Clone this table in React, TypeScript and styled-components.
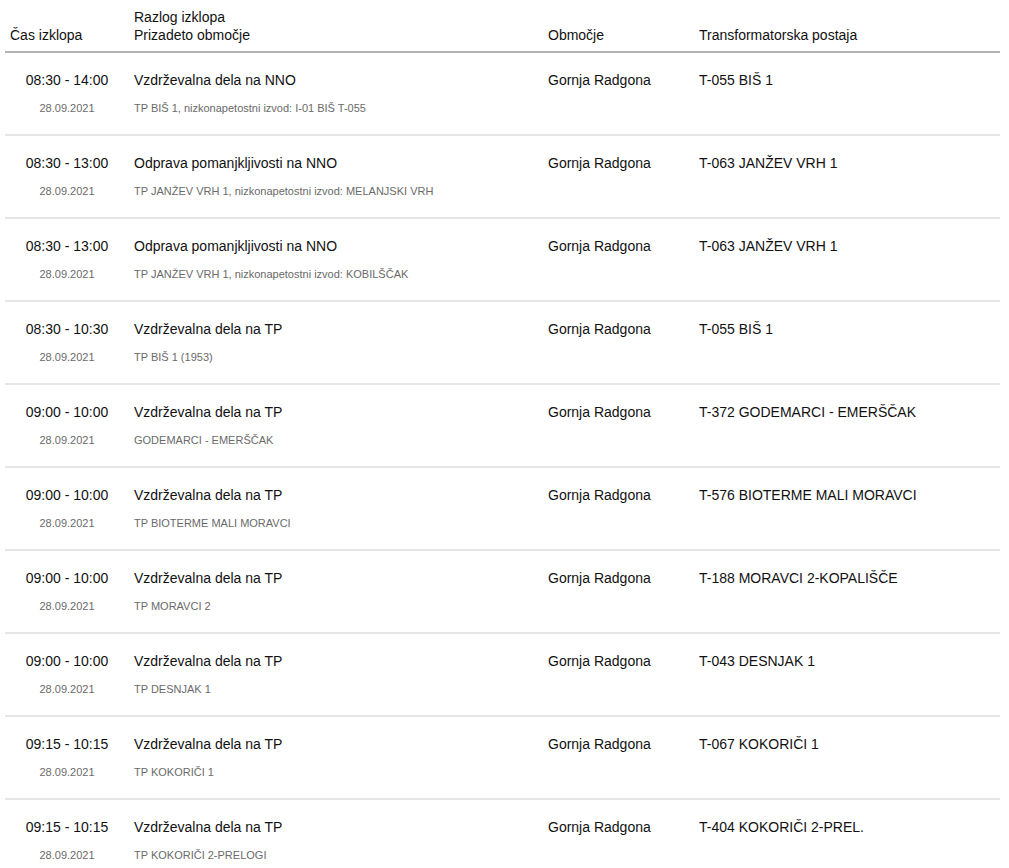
import React from "react";
import styled, { createGlobalStyle } from "styled-components";

const Global = createGlobalStyle`
  html, body { margin: 0; padding: 0; background: #fff; }
  body { font-family: "Liberation Sans", Arial, sans-serif; color: #111; }
`;

const Wrap = styled.div`
  padding: 8px 9px 0 5px;
`;

const Table = styled.table`
  width: 995px;
  border-collapse: collapse;
  table-layout: fixed;
`;

const Th = styled.th`
  text-align: left;
  font-weight: normal;
  font-size: 14px;
  line-height: 18px;
  vertical-align: bottom;
  padding: 0 5px 7px;
  color: #111;
`;

const HeadRow = styled.tr`
  border-bottom: 2px solid #b3b3b3;
`;

const Row = styled.tr`
  border-bottom: 2px solid #e6e6e6;
`;

const Td = styled.td<{ $center?: boolean }>`
  vertical-align: top;
  padding: 18px 5px 19px;
  font-size: 14px;
  line-height: 18px;
  text-align: ${(p) => (p.$center ? "center" : "left")};
  color: #111;
`;

const Sub = styled.div`
  margin-top: 12px;
  font-size: 11px;
  line-height: 14px;
  color: #6a6a6a;
`;

type Item = {
  time: string;
  reason: string;
  affected: string;
  area: string;
  station: string;
};

const items: Item[] = [
  { time: "08:30 - 14:00", reason: "Vzdrževalna dela na NNO", affected: "TP BIŠ 1, nizkonapetostni izvod: I-01 BIŠ T-055", area: "Gornja Radgona", station: "T-055 BIŠ 1" },
  { time: "08:30 - 13:00", reason: "Odprava pomanjkljivosti na NNO", affected: "TP JANŽEV VRH 1, nizkonapetostni izvod: MELANJSKI VRH", area: "Gornja Radgona", station: "T-063 JANŽEV VRH 1" },
  { time: "08:30 - 13:00", reason: "Odprava pomanjkljivosti na NNO", affected: "TP JANŽEV VRH 1, nizkonapetostni izvod: KOBILŠČAK", area: "Gornja Radgona", station: "T-063 JANŽEV VRH 1" },
  { time: "08:30 - 10:30", reason: "Vzdrževalna dela na TP", affected: "TP BIŠ 1 (1953)", area: "Gornja Radgona", station: "T-055 BIŠ 1" },
  { time: "09:00 - 10:00", reason: "Vzdrževalna dela na TP", affected: "GODEMARCI - EMERŠČAK", area: "Gornja Radgona", station: "T-372 GODEMARCI - EMERŠČAK" },
  { time: "09:00 - 10:00", reason: "Vzdrževalna dela na TP", affected: "TP BIOTERME MALI MORAVCI", area: "Gornja Radgona", station: "T-576 BIOTERME MALI MORAVCI" },
  { time: "09:00 - 10:00", reason: "Vzdrževalna dela na TP", affected: "TP MORAVCI 2", area: "Gornja Radgona", station: "T-188 MORAVCI 2-KOPALIŠČE" },
  { time: "09:00 - 10:00", reason: "Vzdrževalna dela na TP", affected: "TP DESNJAK 1", area: "Gornja Radgona", station: "T-043 DESNJAK 1" },
  { time: "09:15 - 10:15", reason: "Vzdrževalna dela na TP", affected: "TP KOKORIČI 1", area: "Gornja Radgona", station: "T-067 KOKORIČI 1" },
  { time: "09:15 - 10:15", reason: "Vzdrževalna dela na TP", affected: "TP KOKORIČI 2-PRELOGI", area: "Gornja Radgona", station: "T-404 KOKORIČI 2-PREL." },
];

export default function App() {
  return (
    <Wrap>
      <Global />
      <Table>
        <colgroup>
          <col style={{ width: 124 }} />
          <col style={{ width: 414 }} />
          <col style={{ width: 151 }} />
          <col style={{ width: 306 }} />
        </colgroup>
        <thead>
          <HeadRow>
            <Th>Čas izklopa</Th>
            <Th>
              Razlog izklopa
              <br />
              Prizadeto območje
            </Th>
            <Th>Območje</Th>
            <Th>Transformatorska postaja</Th>
          </HeadRow>
        </thead>
        <tbody>
          {items.map((it, i) => (
            <Row key={i}>
              <Td $center>
                {it.time}
                <Sub>28.09.2021</Sub>
              </Td>
              <Td>
                {it.reason}
                <Sub>{it.affected}</Sub>
              </Td>
              <Td>{it.area}</Td>
              <Td>{it.station}</Td>
            </Row>
          ))}
        </tbody>
      </Table>
    </Wrap>
  );
}
